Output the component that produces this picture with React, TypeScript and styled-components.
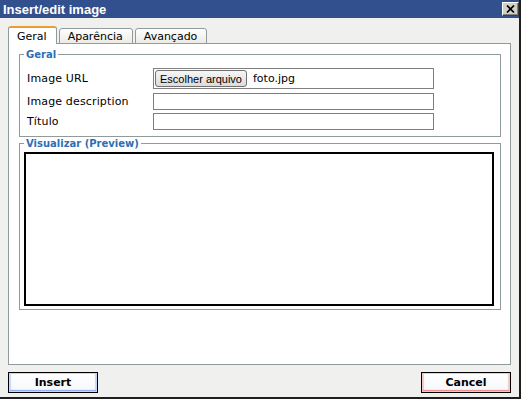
import styled, { createGlobalStyle } from "styled-components";

const GlobalStyle = createGlobalStyle`
  body {
    margin: 0;
    background: #fff;
  }
  * {
    box-sizing: border-box;
  }
`;

const Window = styled.div`
  width: 521px;
  height: 399px;
  display: flex;
  flex-direction: column;
  background: #f0f0ee;
  border-right: 2px solid #1e1e1e;
  border-bottom: 2px solid #1e1e1e;
  font-family: "DejaVu Sans", Verdana, sans-serif;
  font-size: 11px;
  color: #000;
`;

const TitleBar = styled.div`
  height: 18px;
  display: flex;
  align-items: center;
  justify-content: space-between;
  padding-left: 3px;
  background: #32508e;
  color: #fff;
  font: bold 13px "Liberation Sans", Arial, sans-serif;
`;

const CloseButton = styled.div`
  align-self: flex-start;
  margin-top: 2px;
  width: 17px;
  height: 14px;
  display: flex;
  align-items: center;
  justify-content: center;
  background: #d4d0c8;
  border: 1px solid;
  border-color: #fff #404040 #404040 #fff;
  box-shadow: inset -1px -1px #808080;
`;

const Body = styled.div`
  flex: 1;
  display: flex;
  flex-direction: column;
  padding: 8px 8px 0;
`;

const TabRow = styled.div`
  position: relative;
  z-index: 1;
  height: 18px;
  margin-bottom: -1px;
  display: flex;
  align-items: flex-end;
  gap: 2px;
`;

const Tab = styled.div<{ $active?: boolean }>`
  height: ${(p) => (p.$active ? 18 : 16)}px;
  padding: 0 9px 0 8px;
  display: flex;
  align-items: center;
  border: 1px solid #919b9c;
  border-top: ${(p) => (p.$active ? "2px solid #eb9f32" : "1px solid #919b9c")};
  border-bottom: ${(p) => (p.$active ? "none" : "1px solid #919b9c")};
  border-radius: 3px 3px 0 0;
  background: ${(p) => (p.$active ? "#fff" : "linear-gradient(#fefefe, #ecebe6)")};
`;

const Panel = styled.div`
  flex: 1;
  background: #fff;
  border: 1px solid #919b9c;
  padding: 4px 9px 0 10px;
`;

const Group = styled.fieldset<{ $top: number; $bottom: number }>`
  margin: 0;
  min-width: 0;
  border: 1px solid #919b9c;
  padding: ${(p) => p.$top}px 6px ${(p) => p.$bottom}px 4px;
`;

const Legend = styled.legend`
  padding: 0 2px;
  font-size: 10px;
  font-weight: bold;
  line-height: 13px;
  color: #2b6fb6;
`;

const FieldRow = styled.div<{ $gap?: number }>`
  display: flex;
  align-items: center;
  margin-top: ${(p) => p.$gap ?? 0}px;
`;

const Label = styled.label`
  width: 129px;
  padding-left: 3px;
  letter-spacing: 0.15px;
`;

const TextField = styled.input`
  width: 281px;
  height: 17px;
  margin: 0;
  padding: 0 3px;
  border: 1px solid #7f7f7f;
  background: #fff;
  font: inherit;
  outline: none;
`;

const FileBox = styled.div`
  width: 281px;
  height: 21px;
  padding: 1px;
  display: flex;
  align-items: center;
  gap: 6px;
  border: 1px solid #7f7f7f;
`;

const FileButton = styled.span`
  width: 92px;
  height: 17px;
  display: flex;
  align-items: center;
  justify-content: center;
  border: 1px solid #707070;
  border-radius: 3px;
  background: linear-gradient(#f6f6f6, #dcdcdc);
  font: 11px "Liberation Sans", Arial, sans-serif;
`;

const Preview = styled.div`
  height: 154px;
  border: 2px solid #000;
  background: #fff;
`;

const ButtonRow = styled.div`
  display: flex;
  justify-content: space-between;
  padding: 7px 0 4px;
`;

const DialogButton = styled.button<{ $tint: string; $light: string }>`
  width: 90px;
  height: 21px;
  margin: 0;
  padding: 0;
  border: 1px solid #000;
  background: linear-gradient(#fff, #f6f7fb);
  box-shadow: inset 0 0 0 1px ${(p) => p.$light}, inset 0 -2px 1px ${(p) => p.$tint},
    inset 2px 0 1px ${(p) => p.$light}, inset -2px 0 1px ${(p) => p.$light};
  font-family: "DejaVu Sans", Verdana, sans-serif;
  font-size: 11px;
  font-weight: bold;
  color: #000;
`;

export default function App() {
  return (
    <>
      <GlobalStyle />
      <Window>
        <TitleBar>
          <span>Insert/edit image</span>
          <CloseButton>
            <svg width="9" height="8" viewBox="0 0 9 8">
              <path d="M1 0.5 L8 7.5 M8 0.5 L1 7.5" stroke="#000" strokeWidth="1.7" />
            </svg>
          </CloseButton>
        </TitleBar>

        <Body>
          <TabRow>
            <Tab $active>Geral</Tab>
            <Tab>Aparência</Tab>
            <Tab>Avançado</Tab>
          </TabRow>

          <Panel>
            <Group $top={7} $bottom={6}>
              <Legend>Geral</Legend>
              <FieldRow>
                <Label>Image URL</Label>
                <FileBox>
                  <FileButton>Escolher arquivo</FileButton>
                  <span>foto.jpg</span>
                </FileBox>
              </FieldRow>
              <FieldRow $gap={4}>
                <Label>Image description</Label>
                <TextField type="text" />
              </FieldRow>
              <FieldRow $gap={3}>
                <Label>Título</Label>
                <TextField type="text" />
              </FieldRow>
            </Group>

            <Group $top={2} $bottom={3}>
              <Legend>Visualizar (Preview)</Legend>
              <Preview />
            </Group>
          </Panel>

          <ButtonRow>
            <DialogButton $tint="#8aa7f2" $light="#c8d6fc">Insert</DialogButton>
            <DialogButton $tint="#ee8484" $light="#f8c6c6">Cancel</DialogButton>
          </ButtonRow>
        </Body>
      </Window>
    </>
  );
}
